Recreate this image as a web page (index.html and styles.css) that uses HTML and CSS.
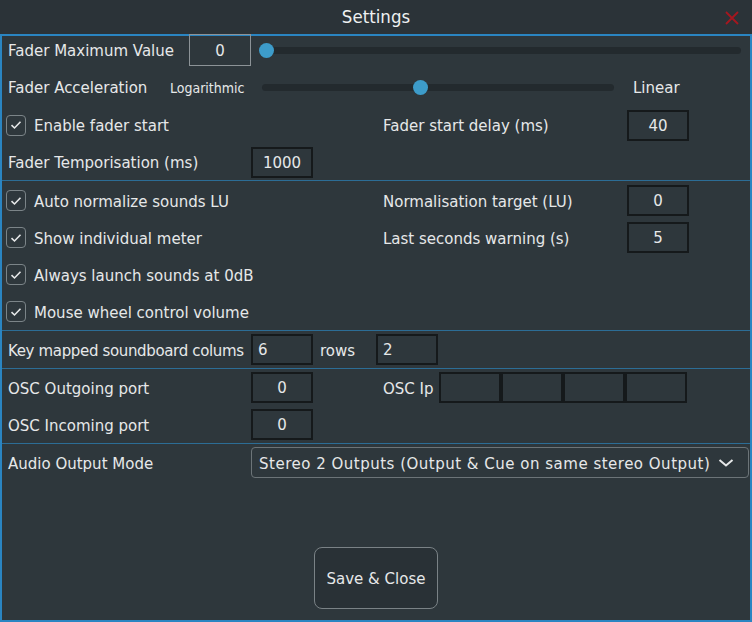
FILE: index.html
```html
<!DOCTYPE html>
<html>
<head>
<meta charset="utf-8">
<link rel="stylesheet" href="styles.css">
</head>
<body>
<div class="window">
  <div class="titlebar">
    <span class="title">Settings</span>
    <svg class="close" width="14" height="14" viewBox="0 0 14 14"><path d="M1 1 L13 13 M13 1 L1 13" stroke="#a5171f" stroke-width="1.8" fill="none"/></svg>
  </div>
  <div class="panel">
    <section class="sec sec1">
      <div class="row row-first">
        <span class="lbl w-max">Fader Maximum Value</span>
        <div class="field field-focus">0</div>
        <div class="slider slider-max"><div class="track"></div><div class="knob knob-min"></div></div>
      </div>
      <div class="row">
        <span class="lbl w-acc">Fader Acceleration</span>
        <span class="small w-log">Logarithmic</span>
        <div class="slider slider-acc"><div class="track"></div><div class="knob knob-mid"></div></div>
        <span class="lbl lin">Linear</span>
      </div>
      <div class="row">
        <div class="left">
          <span class="cb"><svg width="12" height="10" viewBox="0 0 12 10"><path d="M1.5 5.2 L4.5 8 L10.5 1.8" stroke="#e6e8e9" stroke-width="1.6" fill="none"/></svg></span>
          <span class="lbl">Enable fader start</span>
        </div>
        <span class="lbl w-right">Fader start delay (ms)</span>
        <div class="field">40</div>
      </div>
      <div class="row">
        <span class="lbl w-col">Fader Temporisation (ms)</span>
        <div class="field">1000</div>
      </div>
    </section>
    <section class="sec sec2">
      <div class="row">
        <div class="left">
          <span class="cb"><svg width="12" height="10" viewBox="0 0 12 10"><path d="M1.5 5.2 L4.5 8 L10.5 1.8" stroke="#e6e8e9" stroke-width="1.6" fill="none"/></svg></span>
          <span class="lbl">Auto normalize sounds LU</span>
        </div>
        <span class="lbl w-right">Normalisation target (LU)</span>
        <div class="field">0</div>
      </div>
      <div class="row">
        <div class="left">
          <span class="cb"><svg width="12" height="10" viewBox="0 0 12 10"><path d="M1.5 5.2 L4.5 8 L10.5 1.8" stroke="#e6e8e9" stroke-width="1.6" fill="none"/></svg></span>
          <span class="lbl">Show individual meter</span>
        </div>
        <span class="lbl w-right">Last seconds warning (s)</span>
        <div class="field">5</div>
      </div>
      <div class="row">
        <div class="left">
          <span class="cb"><svg width="12" height="10" viewBox="0 0 12 10"><path d="M1.5 5.2 L4.5 8 L10.5 1.8" stroke="#e6e8e9" stroke-width="1.6" fill="none"/></svg></span>
          <span class="lbl">Always launch sounds at 0dB</span>
        </div>
      </div>
      <div class="row">
        <div class="left">
          <span class="cb"><svg width="12" height="10" viewBox="0 0 12 10"><path d="M1.5 5.2 L4.5 8 L10.5 1.8" stroke="#e6e8e9" stroke-width="1.6" fill="none"/></svg></span>
          <span class="lbl">Mouse wheel control volume</span>
        </div>
      </div>
    </section>
    <section class="sec">
      <div class="row">
        <span class="lbl w-col tight">Key mapped soundboard colums</span>
        <div class="field field-left">6</div>
        <span class="lbl w-rows">rows</span>
        <div class="field field-left">2</div>
      </div>
    </section>
    <section class="sec">
      <div class="row">
        <span class="lbl w-col">OSC Outgoing port</span>
        <div class="field">0</div>
        <span class="lbl w-oscip">OSC Ip</span>
        <div class="field"></div>
        <div class="field"></div>
        <div class="field"></div>
        <div class="field"></div>
      </div>
      <div class="row">
        <span class="lbl w-col">OSC Incoming port</span>
        <div class="field">0</div>
      </div>
    </section>
    <section class="sec">
      <div class="row">
        <span class="lbl w-col">Audio Output Mode</span>
        <div class="combo">
          <span class="combo-text">Stereo 2 Outputs (Output &amp; Cue on same stereo Output)</span>
          <svg width="16" height="10" viewBox="0 0 16 10"><path d="M1.5 2 L8 7.5 L14.5 2" stroke="#e6e8e9" stroke-width="2" fill="none"/></svg>
        </div>
      </div>
    </section>
    <div class="footer">
      <button class="btn">Save &amp; Close</button>
    </div>
  </div>
</div>
</body>
</html>
```
FILE: styles.css
```css
* { box-sizing: border-box; }
html, body { margin: 0; padding: 0; }
body {
  background: #2e373c;
  font-family: "DejaVu Sans", Verdana, sans-serif;
  font-size: 15px;
  color: #e6e8e9;
}
.window {
  width: 752px;
  height: 622px;
  display: flex;
  flex-direction: column;
}
.titlebar {
  height: 34px;
  background: #2b3338;
  display: flex;
  align-items: center;
  justify-content: center;
  position: relative;
}
.title {
  font-family: "DejaVu Sans Condensed", "DejaVu Sans", sans-serif;
  font-size: 18.5px;
  color: #eef0f1;
  margin-top: -1px;
}
.close {
  position: absolute;
  left: 725px;
  top: 11px;
}
.panel {
  flex: 1;
  border: 2px solid #2a85c2;
  display: flex;
  flex-direction: column;
  background: #2e373c;
}
.sec { border-top: 1px solid #2c6d96; }
.sec1 { border-top: none; }
.sec2 { padding-top: 1px; }
.row {
  height: 37px;
  display: flex;
  align-items: center;
  padding-left: 6px;
  white-space: nowrap;
}
.sec1 .row { height: 38px; }
.sec1 .row:last-child { height: 36px; }
.sec1 .row-first {
  margin-top: -2px;
  height: 34px;
  padding-bottom: 2px;
}
.lbl { display: inline-block; padding-top: 2px; }
.tight { letter-spacing: -0.35px; }
.w-max { width: 181px; }
.w-acc { width: 162px; }
.w-log { width: 92px; }
.w-col { width: 243px; }
.w-right { width: 244px; }
.w-rows { width: 63px; padding-left: 7px; }
.w-oscip { width: 56px; margin-left: 70px; }
.left {
  width: 375px;
  display: flex;
  align-items: center;
}
.small {
  font-family: "DejaVu Sans Condensed", "DejaVu Sans", sans-serif;
  font-size: 14px;
  display: inline-block;
  padding-top: 2px;
}
.lin { margin-left: 19px; }
.cb {
  width: 20px;
  height: 21px;
  margin-left: -2px;
  margin-right: 8px;
  border: 1px solid #7b8488;
  border-radius: 4px;
  display: flex;
  align-items: center;
  justify-content: center;
}
.field {
  width: 62px;
  height: 31px;
  border: 2px solid #15191b;
  display: flex;
  align-items: center;
  justify-content: center;
  flex: none;
  padding-top: 1px;
}
.field-focus {
  border: 1px solid #8c9397;
  height: 32px;
}
.field-left {
  justify-content: flex-start;
  padding-left: 5px;
}
.slider {
  position: relative;
  height: 14px;
  display: flex;
  align-items: center;
}
.slider-max { width: 479px; margin-left: 11px; }
.slider-acc { width: 352px; }
.track {
  width: 100%;
  height: 7px;
  border-radius: 4px;
  background: #232a2e;
}
.knob {
  position: absolute;
  top: 0;
  width: 15px;
  height: 15px;
  border-radius: 50%;
  background: #3d9cca;
}
.knob-min { left: -3px; }
.knob-mid { left: 151px; }
.combo {
  width: 498px;
  height: 31px;
  border: 1px solid #6c7478;
  border-radius: 4px;
  display: flex;
  align-items: center;
  justify-content: space-between;
  padding-left: 7px;
  padding-right: 14px;
}
.combo-text { letter-spacing: 0.5px; padding-top: 2px; }
.footer {
  flex: 1;
  display: flex;
  align-items: flex-end;
  justify-content: center;
  padding-bottom: 11px;
}
.btn {
  width: 124px;
  height: 62px;
  border: 1px solid #7a8286;
  border-radius: 8px;
  background: #293136;
  color: #e6e8e9;
  font-family: "DejaVu Sans", Verdana, sans-serif;
  font-size: 15px;
  padding-top: 2px;
}
```
